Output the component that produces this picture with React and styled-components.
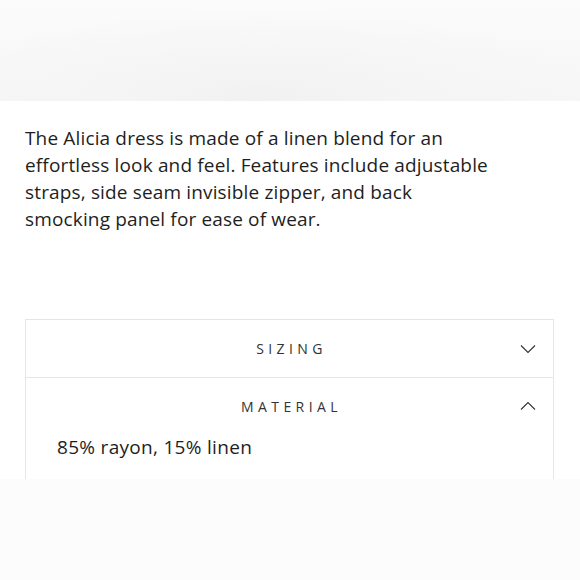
import React from "react";
import styled, { createGlobalStyle } from "styled-components";

const GlobalStyle = createGlobalStyle`
  body {
    margin: 0;
    padding: 0;
    background: #ffffff;
    font-family: "Open Sans", "Liberation Sans", sans-serif;
    color: #222222;
  }
`;

const Page = styled.div`
  width: 580px;
  height: 580px;
  display: flex;
  flex-direction: column;
  overflow: hidden;
`;

const Hero = styled.div`
  height: 101px;
  flex-shrink: 0;
  background: radial-gradient(
      ellipse 60% 90% at 45% 100%,
      #f1f1f1 0%,
      #f5f5f5 45%,
      rgba(250, 250, 250, 0) 100%
    ),
    linear-gradient(to bottom, #fbfbfb, #f6f6f6);
`;

const Description = styled.p`
  margin: 0;
  padding: 24px 20px 0 25px;
  font-size: 19px;
  line-height: 27px;
  letter-spacing: 0.15px;
  color: #1e1e1e;
  white-space: pre-line;
`;

const Accordion = styled.div`
  margin: 86px 26px 0 25px;
  border: 1px solid #e6e6e6;
  border-bottom: none;
  flex: 1;
  display: flex;
  flex-direction: column;
`;

const Item = styled.div`
  border-top: ${(p) => (p.$first ? "none" : "1px solid #e6e6e6")};
`;

const Head = styled.div`
  height: ${(p) => (p.$first ? "57px" : "56px")};
  display: flex;
  align-items: center;
  justify-content: center;
  position: relative;
`;

const Title = styled.span`
  font-size: 14px;
  letter-spacing: 4.4px;
  color: #333333;
  padding-left: 4px;
`;

const Chevron = styled.svg`
  position: absolute;
  right: 17px;
  top: 50%;
  margin-top: -5px;
  width: 16px;
  height: 10px;
`;

const Body = styled.div`
  padding: 0 0 0 31px;
  font-size: 19px;
  line-height: 27px;
  letter-spacing: 0.3px;
  color: #1e1e1e;
`;

const Footer = styled.div`
  height: 101px;
  flex-shrink: 0;
  background: #fcfcfc;
`;

const Arrow = ({ up }) => (
  <Chevron viewBox="0 0 16 10" fill="none">
    <path
      d={up ? "M1 8.5 L8 1.5 L15 8.5" : "M1 1.5 L8 8.5 L15 1.5"}
      stroke="#333"
      strokeWidth="1.1"
    />
  </Chevron>
);

const text = `The Alicia dress is made of a linen blend for an
effortless look and feel. Features include adjustable
straps, side seam invisible zipper, and back
smocking panel for ease of wear.`;

export default function App() {
  return (
    <>
      <GlobalStyle />
      <Page>
        <Hero />
        <Description>{text}</Description>
        <Accordion>
          <Item $first>
            <Head $first>
              <Title>SIZING</Title>
              <Arrow />
            </Head>
          </Item>
          <Item>
            <Head>
              <Title>MATERIAL</Title>
              <Arrow up />
            </Head>
            <Body>85% rayon, 15% linen</Body>
          </Item>
        </Accordion>
        <Footer />
      </Page>
    </>
  );
}
